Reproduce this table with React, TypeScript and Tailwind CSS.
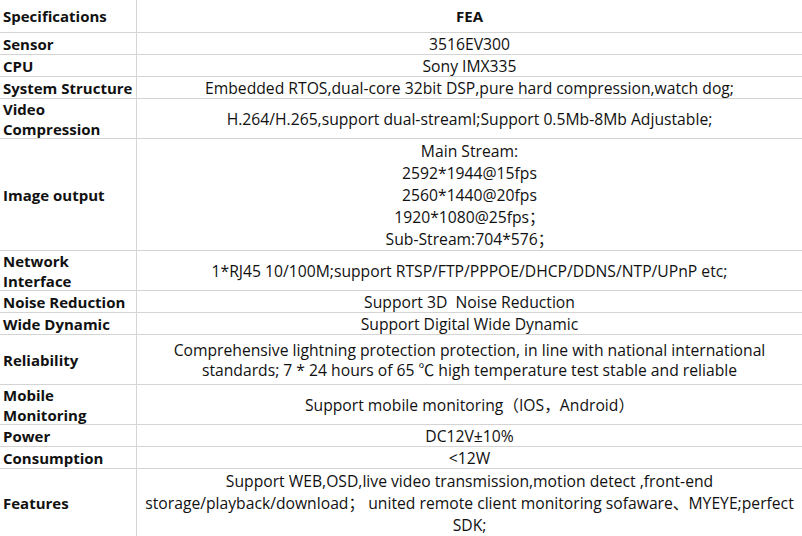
import React from 'react';

type Row = {
    label: string[];
    value: string[];
    h: string;
    head?: boolean;
};

const rows: Row[] = [
    { label: ['Specifications'], value: ['FEA'], h: 'h-[33px]', head: true },
    { label: ['Sensor'], value: ['3516EV300'], h: 'h-[22px]' },
    { label: ['CPU'], value: ['Sony IMX335'], h: 'h-[22px]' },
    { label: ['System Structure'], value: ['Embedded RTOS,dual-core 32bit DSP,pure hard compression,watch dog;'], h: 'h-[22px]' },
    { label: ['Video', 'Compression'], value: ['H.264/H.265,support dual-streamI;Support 0.5Mb-8Mb Adjustable;'], h: 'h-[40px]' },
    {
        label: ['Image output'],
        value: ['Main Stream:', '2592*1944@15fps', '2560*1440@20fps', '1920*1080@25fps；', 'Sub-Stream:704*576；'],
        h: 'h-[112px]',
    },
    { label: ['Network', 'Interface'], value: ['1*RJ45 10/100M;support RTSP/FTP/PPPOE/DHCP/DDNS/NTP/UPnP etc;'], h: 'h-[40px]' },
    { label: ['Noise Reduction'], value: ['Support 3D  Noise Reduction'], h: 'h-[22px]' },
    { label: ['Wide Dynamic'], value: ['Support Digital Wide Dynamic'], h: 'h-[22px]' },
    {
        label: ['Reliability'],
        value: [
            'Comprehensive lightning protection protection, in line with national international',
            'standards; 7 * 24 hours of 65 ℃ high temperature test stable and reliable',
        ],
        h: 'h-[50px]',
    },
    { label: ['Mobile', 'Monitoring'], value: ['Support mobile monitoring（IOS，Android）'], h: 'h-[40px]' },
    { label: ['Power'], value: ['DC12V±10%'], h: 'h-[22px]' },
    { label: ['Consumption'], value: ['<12W'], h: 'h-[22px]' },
    {
        label: ['Features'],
        value: [
            'Support WEB,OSD,live video transmission,motion detect ,front-end',
            'storage/playback/download； united remote client monitoring sofaware、MYEYE;perfect',
            'SDK;',
        ],
        h: 'h-[67px]',
    },
];

export default function App() {
    return (
        <div
            className="w-[802px] h-[536px] overflow-hidden bg-white text-[#111] text-[15px]"
            style={{ fontFamily: '"Open Sans", "Noto Sans CJK SC", sans-serif' }}
        >
            {rows.map((r, i) => (
                <div key={i} className={`flex ${r.h} ${i < rows.length - 1 ? 'border-b border-[#d4d4d4]' : ''}`}>
                    <div className="flex w-[137px] flex-shrink-0 flex-col justify-center border-r border-[#d4d4d4] pl-[3px] font-bold leading-[20px]">
                        {r.label.map((l) => (
                            <span key={l}>{l}</span>
                        ))}
                    </div>
                    <div
                        className={`flex flex-1 flex-col items-center justify-center text-center whitespace-pre ${
                            r.value.length > 2 ? 'leading-[22px]' : 'leading-[20px]'
                        } ${r.head ? 'font-bold text-[15px]' : 'text-[15.7px]'}`}
                    >
                        {r.value.map((v) => (
                            <span key={v}>{v}</span>
                        ))}
                    </div>
                </div>
            ))}
        </div>
    );
}
